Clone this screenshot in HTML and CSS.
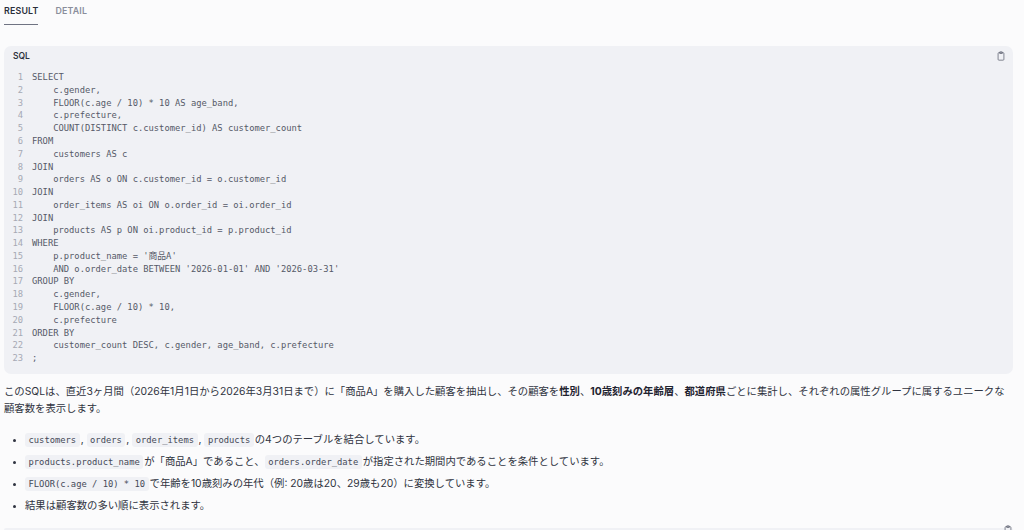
FILE: index.html
```html
<!DOCTYPE html>
<html lang="ja">
<head>
<meta charset="utf-8">
<title>SQL Result</title>
<link rel="stylesheet" href="styles.css">
</head>
<body>
<nav class="tabs">
  <a class="tab active">RESULT</a>
  <a class="tab">DETAIL</a>
</nav>
<main class="content">
  <section class="code-block">
    <header class="code-head">
      <span class="code-lang">SQL</span>
      <svg class="copy" viewBox="0 0 24 24" fill="none" stroke="currentColor" stroke-width="2"><rect x="5" y="4" width="14" height="18" rx="2"/><rect x="8.500" y="2" width="7" height="4" rx="1"/></svg>
    </header>
    <div class="code-body">
      <ol class="nums"><li>1</li><li>2</li><li>3</li><li>4</li><li>5</li><li>6</li><li>7</li><li>8</li><li>9</li><li>10</li><li>11</li><li>12</li><li>13</li><li>14</li><li>15</li><li>16</li><li>17</li><li>18</li><li>19</li><li>20</li><li>21</li><li>22</li><li>23</li></ol>
<pre class="sql">SELECT
    c.gender,
    FLOOR(c.age / 10) * 10 AS age_band,
    c.prefecture,
    COUNT(DISTINCT c.customer_id) AS customer_count
FROM
    customers AS c
JOIN
    orders AS o ON c.customer_id = o.customer_id
JOIN
    order_items AS oi ON o.order_id = oi.order_id
JOIN
    products AS p ON oi.product_id = p.product_id
WHERE
    p.product_name = '商品A'
    AND o.order_date BETWEEN '2026-01-01' AND '2026-03-31'
GROUP BY
    c.gender,
    FLOOR(c.age / 10) * 10,
    c.prefecture
ORDER BY
    customer_count DESC, c.gender, age_band, c.prefecture
;</pre>
    </div>
  </section>
  <p class="summary">このSQLは、直近3ヶ月間（2026年1月1日から2026年3月31日まで）に「商品A」を購入した顧客を抽出し、その顧客を<b>性別</b>、<b>10歳刻みの年齢層</b>、<b>都道府県</b>ごとに集計し、それぞれの属性グループに属するユニークな顧客数を表示します。</p>
  <ul class="points">
    <li><code>customers</code>, <code>orders</code>, <code>order_items</code>, <code>products</code>の4つのテーブルを結合しています。</li>
    <li><code>products.product_name</code>が「商品A」であること、<code>orders.order_date</code>が指定された期間内であることを条件としています。</li>
    <li><code>FLOOR(c.age / 10) * 10</code>で年齢を10歳刻みの年代（例: 20歳は20、29歳も20）に変換しています。</li>
    <li>結果は顧客数の多い順に表示されます。</li>
  </ul>
  <div class="next-block">
    <svg class="copy" viewBox="0 0 24 24" fill="none" stroke="currentColor" stroke-width="2"><rect x="5" y="4" width="14" height="18" rx="2"/><rect x="8.500" y="2" width="7" height="4" rx="1"/></svg>
  </div>
</main>
</body>
</html>
```
FILE: styles.css
```css
* { box-sizing: border-box; }
html, body { margin: 0; height: 530px; overflow: hidden; }
body {
  background: #fbfbfc;
  color: #2f3340;
  font-family: Inter, "Noto Sans CJK JP", sans-serif;
  font-size: 10.350px;
}
.tabs { display: flex; gap: 17px; padding: 0 4px; height: 25px; }
.tab {
  height: 25px;
  padding-top: 5px;
  font-size: 8.800px;
  line-height: 11px;
  font-weight: 600;
  letter-spacing: 0.2px;
  color: #8a8e9b;
}
.tab.active { color: #2a2e3a; border-bottom: 1px solid #6f7382; }
.content {
  display: flex;
  flex-direction: column;
  height: 505px;
  padding: 21px 11px 0 4px;
}
.code-block { background: #f0f1f5; border-radius: 7px; height: 328px; flex: none; }
.code-head {
  display: flex;
  justify-content: space-between;
  align-items: center;
  height: 20px;
  padding: 0 7px 0 9px;
}
.code-lang { font-size: 8.500px; font-weight: 600; color: #2f3340; }
.copy { width: 10px; height: 10px; color: #6a6e7c; display: block; }
.code-body {
  display: flex;
  padding-top: 5.200px;
  font-family: "DejaVu Sans Mono", "Noto Sans CJK JP", monospace;
  font-size: 8.800px;
  line-height: 12.770px;
}
.nums {
  list-style: none;
  margin: 0;
  padding: 0 9px 0 0;
  width: 28px;
  text-align: right;
  color: #a6a9b4;
  flex: none;
}
.sql { margin: 0; font: inherit; color: #565a68; }
.summary { margin: 9px 0 0; line-height: 17px; color: #2f3340; width: 1005px; }
.summary b { font-weight: 700; color: #1f2330; }
.points { margin: 14px 0 0; padding: 0 0 0 21px; }
.points li { height: 22px; line-height: 17px; }
.points li::marker { font-size: 8px; }
code {
  font-family: "DejaVu Sans Mono", monospace;
  font-size: 8.800px;
  line-height: 1;
  background: #f0f1f5;
  border-radius: 3px;
  padding: 2px 3.500px;
  margin-right: 1px;
  color: #454957;
}
.next-block {
  position: relative;
  margin-top: auto;
  height: 2px;
  flex: none;
  background: #f0f1f5;
  border-radius: 2px 2px 0 0;
}
.next-block .copy { position: absolute; right: 0; top: -3px; }
```
